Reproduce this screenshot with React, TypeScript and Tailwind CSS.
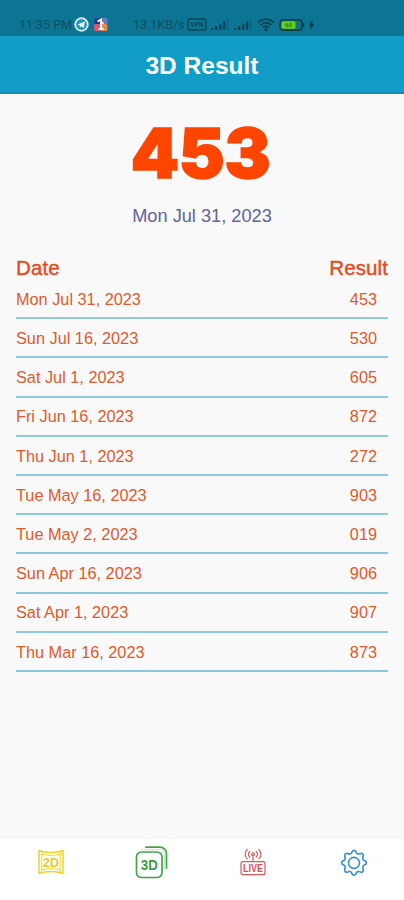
import type { ReactNode } from 'react';

interface DrawResult {
    date: string;
    result: string;
}

const results: DrawResult[] = [
    { date: 'Mon Jul 31, 2023', result: '453' },
    { date: 'Sun Jul 16, 2023', result: '530' },
    { date: 'Sat Jul 1, 2023', result: '605' },
    { date: 'Fri Jun 16, 2023', result: '872' },
    { date: 'Thu Jun 1, 2023', result: '272' },
    { date: 'Tue May 16, 2023', result: '903' },
    { date: 'Tue May 2, 2023', result: '019' },
    { date: 'Sun Apr 16, 2023', result: '906' },
    { date: 'Sat Apr 1, 2023', result: '907' },
    { date: 'Thu Mar 16, 2023', result: '873' },
];

function Signal() {
    return (
        <svg width="19" height="12" viewBox="0 0 19 12" fill="#0b4658">
            <rect x="0" y="9" width="2.4" height="2" />
            <rect x="4" y="7" width="2.4" height="4" />
            <rect x="8" y="5" width="2.4" height="6" />
            <rect x="12" y="2.5" width="2.2" height="8.5" />
            <rect x="15.8" y="0.5" width="1.8" height="10.5" opacity="0.3" />
        </svg>
    );
}

function StatusBar() {
    return (
        <div className="flex h-9 items-end bg-[#0b7593] pl-[19px] pb-[4px] text-[#0b4f63]">
            <span className="w-[55px] whitespace-nowrap text-[12.5px] leading-[14px] font-['Roboto',sans-serif]">11:35 PM</span>
            {/* Telegram */}
            <svg width="15" height="15" viewBox="0 0 15 15">
                <circle cx="7.5" cy="7.5" r="7.2" fill="#d9f0f8" />
                <circle cx="7.5" cy="7.5" r="5.4" fill="#2492c2" />
                <path d="M3.4 7.4 11 4.4 9.7 11 7.3 9.2 6 10.4 5.7 8.3Z" fill="#eefaff" />
            </svg>
            {/* App notification */}
            <svg className="ml-[5px]" width="14" height="15" viewBox="0 0 14 15">
                <rect x="0.5" y="1.5" width="6.5" height="6" rx="1" fill="#35308f" />
                <rect x="6" y="1" width="7.5" height="7" rx="2" fill="#687fc0" />
                <rect x="0" y="7" width="7" height="7" rx="2" fill="#e0586b" />
                <rect x="6" y="7" width="7.5" height="7" rx="2" fill="#e78a4a" />
                <path d="M3.5 4.5 7 2.5v9.5M4.5 12h5M7 6h2.5" stroke="#fff" strokeWidth="1.8" fill="none" />
            </svg>
            <span className="ml-[25px] w-[53px] whitespace-nowrap text-[12.5px] leading-[14px] font-['Roboto',sans-serif]">13.1KB/s</span>
            <svg className="ml-px mb-px" width="20" height="13" viewBox="0 0 20 13">
                <rect x="1" y="1" width="18" height="11" rx="2" fill="none" stroke="#0b4658" strokeWidth="1.5" />
                <text x="10" y="9.2" textAnchor="middle" fontSize="7" fontWeight="700" fill="#0b4658" fontFamily="Roboto, sans-serif" textLength="13" lengthAdjust="spacingAndGlyphs">VPN</text>
            </svg>
            <div className="ml-[4px] mb-px flex gap-[4px]">
                <Signal />
                <Signal />
            </div>
            <svg className="ml-[4px] mb-px" width="18" height="13" viewBox="0 0 18 13" fill="none" stroke="#0b3c4b" strokeWidth="1.6">
                <path d="M1 4.4C5.5.2 12.5.2 17 4.4M3.5 7c3.2-3 7.8-3 11 0M6 9.4c1.8-1.6 4.2-1.6 6 0" />
                <circle cx="9" cy="11.5" r="0.8" fill="#0b3c4b" />
            </svg>
            <svg className="ml-[4px] mb-px" width="26" height="12" viewBox="0 0 26 12">
                <rect x="1" y="0.8" width="22" height="10.4" rx="3" fill="#14707a" stroke="#0a3b47" strokeWidth="1.4" />
                <rect x="2.5" y="2.3" width="14" height="7.4" rx="1.5" fill="#62cf18" />
                <text x="9.5" y="8.2" textAnchor="middle" fontSize="6" fontWeight="700" fill="#227d2b" fontFamily="Roboto, sans-serif">60</text>
                <path d="M24.5 4v4" stroke="#0a3b47" strokeWidth="1.5" />
            </svg>
            <svg className="ml-[3px] mb-px" width="7" height="12" viewBox="0 0 7 12">
                <path d="M4.5 1 .8 6.6h2L2 11l4.2-6h-2Z" fill="#0a3442" />
            </svg>
        </div>
    );
}

function TwoDIcon() {
    return (
        <svg width="28" height="26" viewBox="0 0 28 26" fill="none" stroke="#ecd62b" strokeWidth="1.5" strokeLinejoin="round">
            <path d="M2 1.5c7 2.8 17 2.8 24 0v23c-7-2.8-17-2.8-24 0Z" />
            <path d="M4.8 2.5v21M23.2 2.5v21M5 5.2c6 1.5 12 1.5 18 0M5 20.8c6-1.5 12-1.5 18 0" strokeWidth="1" />
            <text x="14" y="17.6" textAnchor="middle" stroke="none" fill="#e5ca28" fontSize="13" fontWeight="700" fontFamily="Liberation Sans, sans-serif" textLength="16" lengthAdjust="spacingAndGlyphs">2D</text>
        </svg>
    );
}

function ThreeDIcon() {
    return (
        <svg width="34" height="34" viewBox="0 0 34 34" fill="none" stroke="#42a54a" strokeWidth="1.7" strokeLinecap="round">
            <rect x="1.5" y="7" width="25.5" height="25.5" rx="5" />
            <path d="M11 2.2h14a6.5 6.5 0 0 1 6.5 6.5V23" />
            <path d="M7 4.5h17a5.5 5.5 0 0 1 5.5 5.5v15" strokeWidth="0.7" opacity="0.4" />
            <text x="14.3" y="25" textAnchor="middle" stroke="none" fill="#379e40" fontSize="15.5" fontWeight="700" fontFamily="Liberation Sans, sans-serif" textLength="17" lengthAdjust="spacingAndGlyphs">3D</text>
        </svg>
    );
}

function LiveIcon() {
    return (
        <svg width="26" height="28" viewBox="0 0 26 28" fill="none" stroke="#d9585c" strokeWidth="1.2" strokeLinecap="round">
            <path d="M7.2 1.5c-2.8 2.6-2.8 6.8 0 9.4M18.8 1.5c2.8 2.6 2.8 6.8 0 9.4M9.8 3.4c-1.8 1.7-1.8 3.9 0 5.6M16.2 3.4c1.8 1.7 1.8 3.9 0 5.6" />
            <circle cx="13" cy="6.2" r="1.4" />
            <path d="M13 7.8V13" />
            <rect x="1" y="13.7" width="24" height="13" rx="2" />
            <text x="13" y="24" textAnchor="middle" stroke="none" fill="#d64d52" fontSize="10.5" fontWeight="700" fontFamily="Liberation Sans, sans-serif" textLength="20" lengthAdjust="spacingAndGlyphs">LIVE</text>
        </svg>
    );
}

function GearIcon() {
    return (
        <svg className="mt-px" width="28" height="28" viewBox="0.5 0 27 27" fill="none" stroke="#3490cd" strokeWidth="1.5" strokeLinejoin="round">
            <path d="M11.5 4.2C12 2.4 12.6 1.3 14 1.3s2 1.1 2.5 2.9l2 .8c1.7-.9 3-1.2 4 -.2s.7 2.3-.2 4l.8 2c1.8.5 2.9 1.1 2.9 2.5s-1.1 2-2.9 2.5l-.8 2c.9 1.7 1.2 3 .2 4s-2.3.7-4-.2l-2 .8c-.5 1.8-1.1 2.9-2.5 2.9s-2-1.1-2.5-2.9l-2-.8c-1.7.9-3 1.2-4 .2s-.7-2.3.2-4l-.8-2C3.1 15.3 2 14.7 2 13.3s1.1-2 2.9-2.5l.8-2c-.9-1.7-1.2-3-.2-4s2.3-.7 4 .2Z" />
            <circle cx="14" cy="13.4" r="5.3" />
        </svg>
    );
}

function NavButton({ label, children }: { label: string; children: ReactNode }) {
    return (
        <button aria-label={label} className="flex h-[46px] flex-1 items-center justify-center">
            {children}
        </button>
    );
}

export default function App() {
    return (
        <div className="flex h-[900px] w-full flex-col overflow-hidden bg-[#f9f9f9] font-['Liberation_Sans',sans-serif]">
            <StatusBar />
            <header className="flex h-[58px] items-center justify-center border-b-2 border-[#118eb1] bg-[#119dc5]">
                <h1 className="pt-[3px] text-[24.5px] font-bold leading-7 text-white">3D Result</h1>
            </header>

            <main className="flex-1 px-4">
                {/* Latest draw */}
                <div className="flex flex-col items-center pt-[23px]">
                    <div className="mr-[3px] h-[72px] font-['Inter',sans-serif] text-[69px] font-black leading-[72px] tracking-[-0.3px] text-[#ff4500] [-webkit-text-stroke:1.5px_#ff4500]">453</div>
                    <div className="mt-[15px] text-[18.2px] leading-6 text-[#62649b]">Mon Jul 31, 2023</div>
                </div>

                {/* History */}
                <div className="mt-[29px] flex h-[23px] items-center justify-between text-[20.5px] tracking-[0.1px] text-[#e64a1c] [-webkit-text-stroke:0.4px_#e64a1c]">
                    <span>Date</span>
                    <span>Result</span>
                </div>
                {results.map((row) => (
                    <div key={row.date} className="flex h-[39.2px] items-center justify-between border-b-2 border-[#8dcae0] pr-[11px] pt-px text-[16.3px] text-[#e05a2c]">
                        <span>{row.date}</span>
                        <span>{row.result}</span>
                    </div>
                ))}
            </main>

            <nav className="flex h-[61px] bg-white">
                <NavButton label="2D"><TwoDIcon /></NavButton>
                <NavButton label="3D"><ThreeDIcon /></NavButton>
                <NavButton label="Live"><LiveIcon /></NavButton>
                <NavButton label="Settings"><GearIcon /></NavButton>
            </nav>
        </div>
    );
}
